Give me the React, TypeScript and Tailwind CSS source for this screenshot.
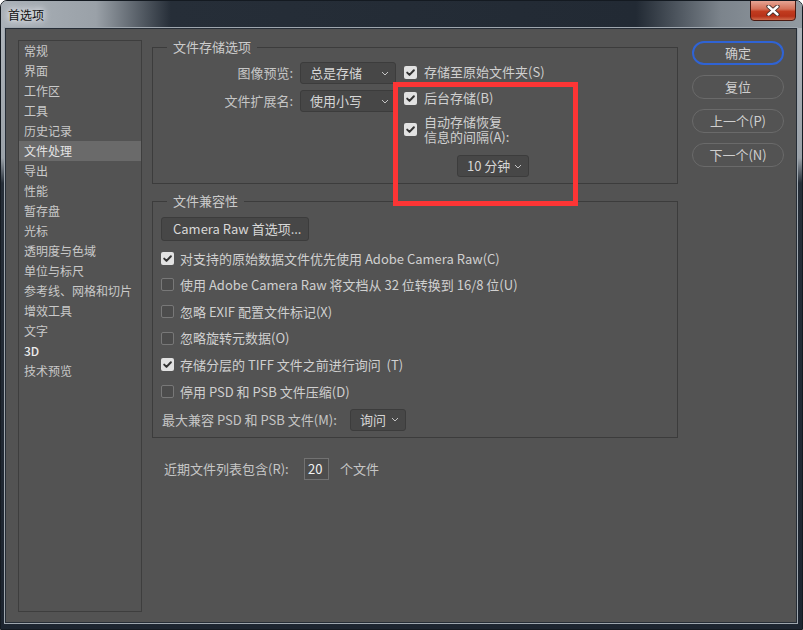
import React from "react";

const sidebarItems = [
  "常规",
  "界面",
  "工作区",
  "工具",
  "历史记录",
  "文件处理",
  "导出",
  "性能",
  "暂存盘",
  "光标",
  "透明度与色域",
  "单位与标尺",
  "参考线、网格和切片",
  "增效工具",
  "文字",
  "3D",
  "技术预览",
];

function Check({ checked }: { checked: boolean }) {
  if (!checked) {
    return <span className="w-[13px] h-[13px] shrink-0 rounded-[2px] border border-[#787878] bg-[#4c4c4c]" />;
  }
  return (
    <span className="w-[13px] h-[13px] shrink-0 rounded-[2px] bg-[#e2e2e2] flex items-center justify-center">
      <svg width="11" height="11" viewBox="0 0 11 11" fill="none">
        <path d="M2.2 5.6 L4.5 7.9 L8.9 3.2" stroke="#333" strokeWidth="2" strokeLinecap="round" strokeLinejoin="round" />
      </svg>
    </span>
  );
}

function Chevron() {
  return (
    <svg width="8" height="5" viewBox="0 0 8 5" fill="none" className="shrink-0">
      <path d="M1 1 L4 4 L7 1" stroke="#c4c4c4" strokeWidth="1" />
    </svg>
  );
}

function Select({ value, className }: { value: string; className: string }) {
  return (
    <div className={"h-[22px] flex items-center justify-between pl-[9px] pr-[6px] rounded-[3px] border border-[#3c3c3c] bg-[#474747] text-[#d6d6d6] " + className}>
      <span>{value}</span>
      <Chevron />
    </div>
  );
}

function CheckRow({ checked, label }: { checked: boolean; label: string }) {
  return (
    <div className="h-[26.6px] flex items-center gap-[6px] pl-[8px]">
      <Check checked={checked} />
      <span className="whitespace-pre">{label}</span>
    </div>
  );
}

function SideButton({ label, primary }: { label: string; primary?: boolean }) {
  return (
    <button
      className={
        "h-[24px] w-full rounded-full flex items-center justify-center text-[#cfcfcf] " +
        (primary ? "border-2 border-[#2f63d4]" : "border border-[#6a6a6a]")
      }
    >
      {label}
    </button>
  );
}

export default function App() {
  return (
    <div className="w-[803px] h-[630px] flex flex-col rounded-t-[7px] border border-[#141a21] bg-[linear-gradient(180deg,#b2b8be_0%,#9aa1a8_25%,#262e38_29%,#1d2530_100%)] font-['Noto_Sans_CJK_SC','Noto_Sans',sans-serif] overflow-hidden">
      {/* title bar */}
      <div className="h-[27px] shrink-0 flex items-start justify-between bg-[linear-gradient(90deg,#aab1b8_0px,#9aa1a8_95px,#262e38_170px,#222a34_635px,#7c848c_720px,#939ba2_803px)]">
        <span className="mt-[6px] ml-[7px] text-[12px] leading-[16px] text-[#111] [text-shadow:0_0_6px_#fff,0_0_10px_#eef]">
          首选项
        </span>
        <div className="-mt-px mr-[6px] w-[46px] h-[21px] rounded-b-[4px] border border-[#4a1a12] bg-[linear-gradient(180deg,#e6a494_0%,#d47058_42%,#c13b1f_55%,#b73219_80%,#d06a4c_100%)] flex items-center justify-center">
          <svg width="14" height="11" viewBox="0 0 14 11">
            <path d="M2.5 1.5 L11.5 9.5 M11.5 1.5 L2.5 9.5" stroke="#3b2a28" strokeWidth="4.2" strokeLinecap="round" />
            <path d="M2.5 1.5 L11.5 9.5 M11.5 1.5 L2.5 9.5" stroke="#fff" strokeWidth="2.4" strokeLinecap="round" />
          </svg>
        </div>
      </div>

      {/* dialog body */}
      <div className="relative flex-1 ml-[4px] mr-[5px] mb-[6px] flex border border-[#262d36] shadow-[0_0_0_1px_#9fa7af] bg-[#535353] pl-[12px] pt-[11px] pb-[10px] text-[13px] text-[#d0d0d0]">
        {/* sidebar */}
        <div className="w-[124px] shrink-0 border border-[#3e3e3e] flex flex-col text-[12px] text-[#c9c9c9]">
          {sidebarItems.map((item) => (
            <div
              key={item}
              className={
                "h-5 shrink-0 flex items-center pl-[5px] " +
                (item === "文件处理" ? "bg-[#6a6a6a] text-[#e4e4e4]" : "") +
                (item === "3D" ? " text-[#ececec] font-medium" : "")
              }
            >
              {item}
            </div>
          ))}
        </div>

        {/* main column */}
        <div className="ml-[10px] w-[526px] shrink-0 flex flex-col">
          <fieldset className="border border-[#3c3c3c] pb-[6px]">
            <legend className="ml-[14px] px-[6px] leading-[14px] text-[#cbcbcb]">文件存储选项</legend>
            <div className="flex mt-[8px]">
              <div className="grid grid-cols-[140px_96px] auto-rows-[22px] gap-x-[7px] gap-y-[6px] items-center">
                <span className="text-right text-[#c6c6c6]">图像预览:</span>
                <Select value="总是存储" className="w-[96px]" />
                <span className="text-right text-[#c6c6c6]">文件扩展名:</span>
                <Select value="使用小写" className="w-[96px]" />
              </div>
              <div className="ml-[8px] flex flex-col">
                <div className="h-[20px] flex items-center gap-[7px]">
                  <Check checked />
                  <span>存储至原始文件夹(S)</span>
                </div>
                <div className="mt-[6px] h-[20px] flex items-center gap-[7px]">
                  <Check checked />
                  <span>后台存储(B)</span>
                </div>
                <div className="mt-[6px] flex items-center gap-[7px]">
                  <Check checked />
                  <div className="flex flex-col">
                    <span className="h-[15px] leading-[15px]">自动存储恢复</span>
                    <span className="h-[15px] leading-[15px]">信息的间隔(A):</span>
                  </div>
                </div>
                <Select value="10 分钟" className="mt-[11px] ml-[53px] w-[72px]" />
              </div>
            </div>
          </fieldset>

          <fieldset className="mt-[10px] border border-[#3c3c3c] pb-[6px]">
            <legend className="ml-[14px] px-[6px] leading-[14px] text-[#cbcbcb]">文件兼容性</legend>
            <button className="mt-[9px] ml-[8px] w-[148px] h-[24px] rounded-[3px] border border-[#3c3c3c] bg-[#474747] text-left pl-[11px] text-[#d8d8d8]">
              Camera Raw 首选项...
            </button>
            <div className="mt-[4px] flex flex-col">
              <CheckRow checked label="对支持的原始数据文件优先使用 Adobe Camera Raw(C)" />
              <CheckRow checked={false} label="使用 Adobe Camera Raw 将文档从 32 位转换到 16/8 位(U)" />
              <CheckRow checked={false} label="忽略 EXIF 配置文件标记(X)" />
              <CheckRow checked={false} label="忽略旋转元数据(O)" />
              <CheckRow checked label="存储分层的 TIFF 文件之前进行询问  (T)" />
              <CheckRow checked={false} label="停用 PSD 和 PSB 文件压缩(D)" />
            </div>
            <div className="mt-[4.4px] h-[22px] flex items-center pl-[9px]">
              <span className="w-[188px] text-[#c6c6c6]">最大兼容 PSD 和 PSB 文件(M):</span>
              <Select value="询问" className="w-[56px]" />
            </div>
          </fieldset>

          <div className="mt-[20px] h-[22px] flex items-center pl-[12px]">
            <span className="w-[140px] text-[#c6c6c6]">近期文件列表包含(R):</span>
            <div className="w-[25px] h-[22px] border border-[#727272] bg-[#4d4d4d] flex items-center pl-[3px] text-[#f2f2f2]">20</div>
            <span className="ml-[11px] text-[#c6c6c6]">个文件</span>
          </div>
        </div>

        {/* buttons */}
        <div className="ml-[14px] mt-[1px] w-[92px] flex flex-col gap-[10px]">
          <SideButton label="确定" primary />
          <SideButton label="复位" />
          <SideButton label="上一个(P)" />
          <SideButton label="下一个(N)" />
        </div>

        {/* highlight annotation */}
        <div className="absolute left-[387px] top-[53px] w-[185px] h-[124px] border-[5px] border-[#fd3535] pointer-events-none" />
      </div>
    </div>
  );
}
